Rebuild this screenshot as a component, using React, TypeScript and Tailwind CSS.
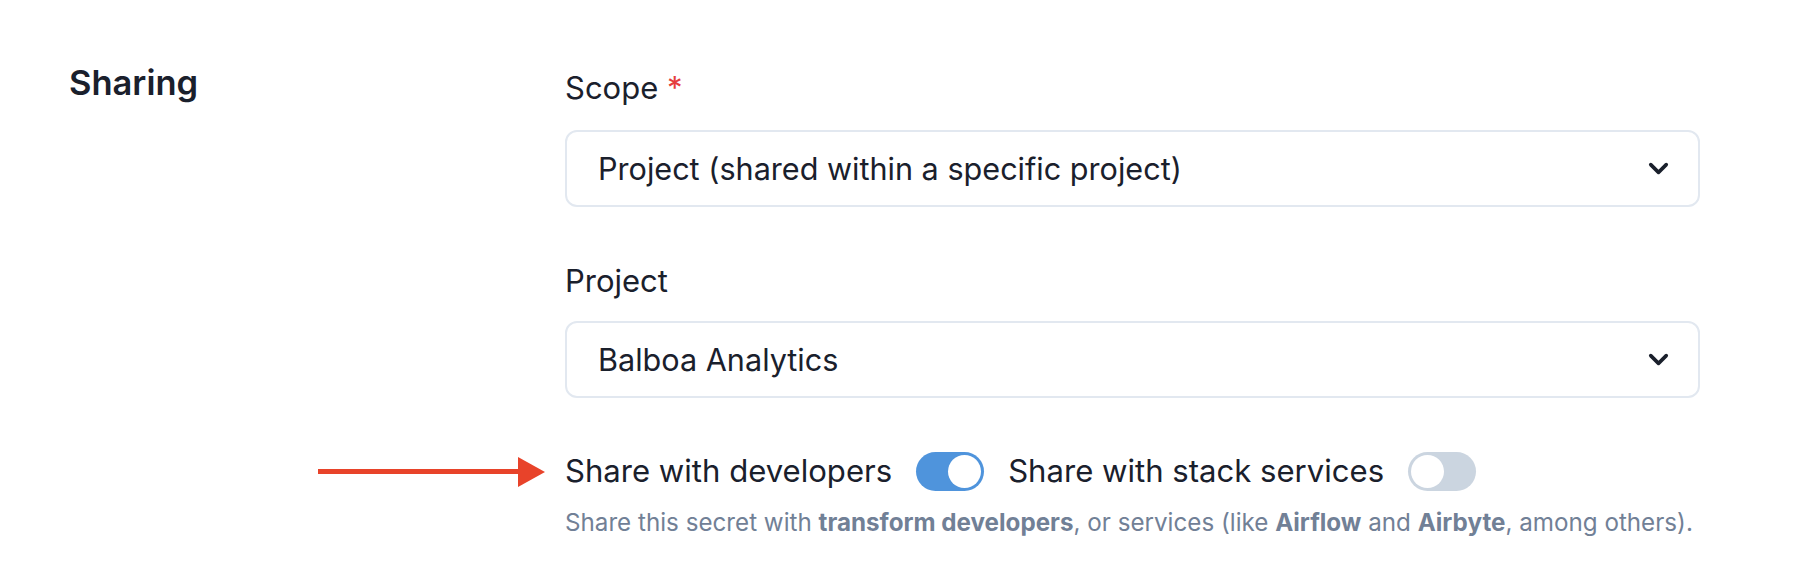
import { ChevronDown } from "lucide-react";

function Toggle({ on }: { on: boolean }) {
  return (
    <span
      className={
        "inline-flex w-[68px] h-[39px] rounded-full p-[3px] items-center shrink-0 " +
        (on ? "bg-[#4f94dc] justify-end" : "bg-[#cbd5e0] justify-start")
      }
    >
      <span className="block w-[33px] h-[33px] rounded-full bg-white" />
    </span>
  );
}

function Select({ value }: { value: string }) {
  return (
    <div className="flex items-center justify-between h-[77px] border-2 border-[#e2e8f0] rounded-[12px] pl-[31px] pr-[24px] bg-white">
      <span className="text-[30.6px] text-[#1a202c]">{value}</span>
      <ChevronDown className="w-[31px] h-[31px] text-[#1a202c]" strokeWidth={2.8} />
    </div>
  );
}

export default function App() {
  return (
    <div className="min-h-screen bg-white font-['Inter',sans-serif] text-[#1a202c] pt-[60px]">
      <div className="flex">
        <div className="w-[565px] pl-[69px] shrink-0">
          <h2 className="text-[34.5px] font-semibold leading-[45px]">Sharing</h2>
        </div>
        <div className="w-[1135px]">
          <label className="block text-[31px] leading-[45px] mt-[5px]">
            Scope <span className="text-[#e53e3e]">*</span>
          </label>
          <div className="mt-[20px]">
            <Select value="Project (shared within a specific project)" />
          </div>
          <label className="block text-[31px] leading-[45px] mt-[51px]">Project</label>
          <div className="mt-[18px]">
            <Select value="Balboa Analytics" />
          </div>
          <div className="relative mt-[51px] flex items-center gap-[24px]">
            <div className="absolute left-[-247px] top-1/2 -translate-y-1/2 flex items-center">
              <span className="block w-[200px] h-[5px] bg-[#e8432a]" />
              <span className="block w-0 h-0 border-y-[15px] border-y-transparent border-l-[27px] border-l-[#e8432a]" />
            </div>
            <span className="text-[31.1px] leading-[45px]">Share with developers</span>
            <Toggle on />
            <span className="text-[31.1px] leading-[45px]">Share with stack services</span>
            <Toggle on={false} />
          </div>
          <p className="mt-[11px] text-[24.2px] leading-[36px] text-[#718096]">
            Share this secret with <strong className="font-bold">transform developers</strong>, or services (like{" "}
            <strong className="font-bold">Airflow</strong> and <strong className="font-bold">Airbyte</strong>, among others).
          </p>
        </div>
      </div>
    </div>
  );
}
